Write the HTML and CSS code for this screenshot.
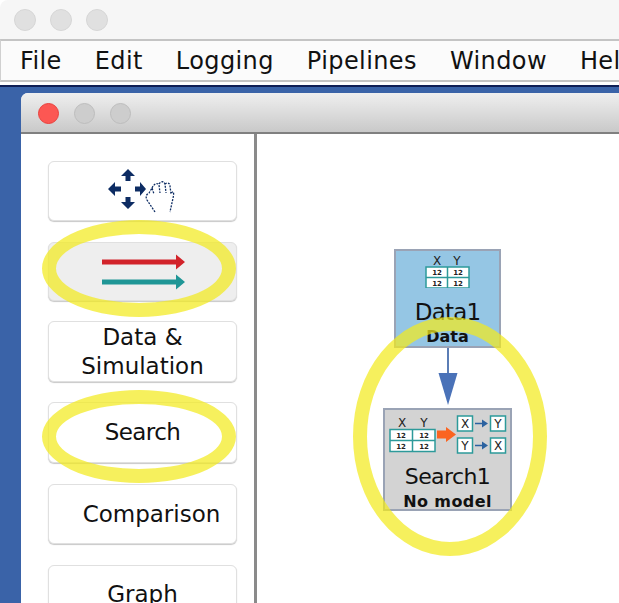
FILE: index.html
```html
<!DOCTYPE html>
<html>
  <head>
    <meta charset="UTF-8" />
    <title>Tetrad</title>
    <link rel="stylesheet" href="styles.css">
  </head>
  <body>
    <div class="titlebar">
      <span class="light"></span>
      <span class="light"></span>
      <span class="light"></span>
    </div>
    <div class="menubar">
      <span>File</span>
      <span>Edit</span>
      <span>Logging</span>
      <span>Pipelines</span>
      <span>Window</span>
      <span>Help</span>
    </div>
    <div class="desktop">
      <div class="window">
        <div class="window-title">
          <span class="light light-close"></span>
          <span class="light light-off"></span>
          <span class="light light-off"></span>
        </div>
        <div class="window-body">
          <div class="sidebar">
            <div class="tool tool-move">
              <svg width="80" height="50" viewBox="0 0 80 50">
                <g fill="#0d2c63">
                  <path d="M20 3 L27 10 L22.5 10 L22.5 15 L17.5 15 L17.5 10 L13 10 Z" />
                  <path d="M20 43 L27 36 L22.5 36 L22.5 31 L17.5 31 L17.5 36 L13 36 Z" />
                  <path d="M0 23 L7 16 L7 20.5 L13 20.5 L13 25.5 L7 25.5 L7 30 Z" />
                  <path d="M38 23 L32 16 L32 20.5 L27 20.5 L27 25.5 L32 25.5 L32 30 Z" />
                </g>
                <path d="M47 46 L39 34 C37 30 39 28 41 27 L44 22 L46 28 M44 22 C46 18 49 16 51 19 L52 27 M51 18 C53 15 56 15 57 18 L58 27 M57 18 C59 16 62 17 62 20 L63 28 C65 24 66 26 65.5 30 L62 46" fill="none" stroke="#0d2c63" stroke-width="1.3" stroke-dasharray="2 1.2" />
              </svg>
            </div>
            <div class="tool tool-flow">
              <svg width="84" height="36" viewBox="0 0 84 36">
                <path d="M0 5.5 H74 V0.5 L83 8 L74 15.5 V10.5 H0 Z" fill="#d2232a" />
                <path d="M0 25.5 H74 V20.5 L83 28 L74 35.5 V30.5 H0 Z" fill="#1f9696" />
              </svg>
            </div>
            <div class="tool tool-data">Data &amp;<br>Simulation</div>
            <div class="tool tool-search">Search</div>
            <div class="tool tool-compare">Comparison</div>
            <div class="tool tool-graph">Graph</div>
          </div>
          <div class="canvas">
            <svg class="edge" width="30" height="60" viewBox="0 0 30 60">
              <path d="M15 0 V26" stroke="#5b7db5" stroke-width="2" />
              <path d="M5.5 25 H24.5 L15 57 Z" fill="#4a72b8" />
            </svg>
            <div class="node node-data">
              <svg class="node-icon" width="46" height="32" viewBox="0 0 46 32">
                <text x="12" y="9" class="var">X</text>
                <text x="32" y="9" class="var">Y</text>
                <rect x="1" y="11" width="43" height="21" fill="#fff" stroke="#2d9a9a" stroke-width="1.5" />
                <path d="M22.5 11 V32 M1 21.5 H44" stroke="#2d9a9a" stroke-width="1.5" />
                <text x="12" y="19" class="cell">12</text>
                <text x="33" y="19" class="cell">12</text>
                <text x="12" y="29.5" class="cell">12</text>
                <text x="33" y="29.5" class="cell">12</text>
              </svg>
              <div class="node-name name-data">Data1</div>
              <div class="node-kind">Data</div>
            </div>
            <div class="node node-search">
              <svg class="node-icon" width="118" height="44" viewBox="0 0 118 44">
                <text x="13" y="12" class="var">X</text>
                <text x="35" y="12" class="var">Y</text>
                <rect x="1" y="14.5" width="45" height="22" fill="#fff" stroke="#2d9a9a" stroke-width="1.5" />
                <path d="M23.5 14.5 V36.5 M1 25.5 H46" stroke="#2d9a9a" stroke-width="1.5" />
                <text x="12" y="23" class="cell">12</text>
                <text x="35" y="23" class="cell">12</text>
                <text x="12" y="34" class="cell">12</text>
                <text x="35" y="34" class="cell">12</text>
                <path d="M48 15.5 H57 V12 L67 19.5 L57 27 V23.5 H48 Z" fill="#fb6420" />
                <g fill="#fff" stroke="#2d9a9a" stroke-width="1.5">
                  <rect x="68.5" y="1" width="15" height="15" />
                  <rect x="101.5" y="1" width="15" height="15" />
                  <rect x="68.5" y="23" width="15" height="15" />
                  <rect x="101.5" y="23" width="15" height="15" />
                </g>
                <text x="76" y="13" class="var">X</text>
                <text x="109" y="13" class="var">Y</text>
                <text x="76" y="35" class="var">Y</text>
                <text x="109" y="35" class="var">X</text>
                <path d="M86 8.5 H94 M86 30.5 H94" stroke="#2b62a0" stroke-width="1.6" />
                <path d="M93 4.5 L99 8.5 L93 12.5 Z M93 26.5 L99 30.5 L93 34.5 Z" fill="#2b62a0" />
              </svg>
              <div class="node-name name-search">Search1</div>
              <div class="node-kind kind-search">No model</div>
            </div>
          </div>
        </div>
      </div>
    </div>
    <!-- yellow rings drawn over the screenshot -->
    <div class="ring ring-flow"></div>
    <div class="ring ring-search"></div>
    <div class="ring ring-nodes"></div>
  </body>
</html>
```

FILE: styles.css
```css
html, body { margin: 0; height: 100%; }
body {
    width: 619px;
    height: 603px;
    overflow: hidden;
    position: relative;
    background: #fff;
    font-family: "DejaVu Sans", sans-serif;
    color: #111;
}
.titlebar {
    height: 39px;
    box-sizing: border-box;
    padding: 9px 0 0 14px;
    display: flex;
    gap: 14px;
    background: #f6f6f6;
    border-top-left-radius: 8px;
}
.light {
    width: 22px;
    height: 22px;
    box-sizing: border-box;
    border-radius: 50%;
    background: #e0e0e0;
    border: 1px solid #d6d6d6;
}
.menubar {
    height: 43px;
    box-sizing: border-box;
    display: flex;
    align-items: center;
    gap: 33px;
    padding: 0 0 0 19px;
    background: #fbfbfb;
    border-top: 2px solid #c4c4c4;
    border-bottom: 2px solid #c4c4c4;
    border-left: 1px solid #d0d0d0;
    font-size: 24px;
    letter-spacing: 0.4px;
    white-space: nowrap;
}
.desktop {
    height: 521px;
    box-sizing: border-box;
    padding: 6px 0 0 21px;
    margin-top: 3px;
    background: #3a63a8;
    border-top: 2px solid #0f1f55;
}
.window {
    height: 100%;
    background: #fff;
    border-top-left-radius: 7px;
    display: flex;
    flex-direction: column;
}
.window-title {
    height: 41px;
    flex: none;
    box-sizing: border-box;
    padding: 10px 0 0 17px;
    display: flex;
    gap: 15px;
    background: linear-gradient(#efefef, #c9c9c9);
    border-bottom: 2px solid #808080;
    border-top-left-radius: 7px;
}
.window-title .light { width: 21px; height: 21px; }
.light-close { background: #fc5753; border-color: #e9403c; }
.light-off { background: #cdcdcd; border-color: #bdbdbd; }
.window-body { flex: 1; display: flex; min-height: 0; }
.sidebar {
    width: 236px;
    flex: none;
    box-sizing: border-box;
    padding: 27px 0 0 27px;
    display: flex;
    flex-direction: column;
    gap: 20px;
    border-right: 3px solid #8a8a8a;
    overflow: hidden;
}
.tool {
    width: 189px;
    height: 60px;
    flex: none;
    box-sizing: border-box;
    display: flex;
    align-items: center;
    justify-content: center;
    text-align: center;
    line-height: 29px;
    font-size: 23px;
    background: #fff;
    border: 1px solid #e0e0e0;
    border-radius: 6px;
    box-shadow: 0 1px 1px #c8c8c8;
}
.tool-move { margin-bottom: 1px; }
.tool-move svg { margin-left: 10px; }
.tool-flow { height: 59px; background: #eee; }
.tool-flow svg { margin: 1px 0 0 2px; }
.tool-data { height: 61px; }
.tool-search { height: 61px; margin-bottom: 1px; letter-spacing: -0.6px; }
.tool-compare { margin-bottom: 1px; padding-left: 18px; }
.tool-graph { align-items: flex-start; padding-top: 14px; }
.canvas { flex: 1; position: relative; }
.node {
    position: absolute;
    box-sizing: border-box;
    display: flex;
    flex-direction: column;
    align-items: center;
    border: 2px solid #9aa3b5;
    padding-top: 5px;
}
.node-data {
    left: 137px;
    top: 115px;
    width: 107px;
    height: 99px;
    background: #95c6e4;
}
.node-search {
    left: 126px;
    top: 274px;
    width: 129px;
    height: 103px;
    background: #d3d3d3;
}
.node-icon { display: block; flex: none; }
.node-name { font-size: 23px; line-height: 28px; margin-top: 10px; }
.node-kind { font-size: 16px; font-weight: bold; line-height: 18px; margin-top: 2px; }
.name-data { letter-spacing: -0.8px; }
.name-search { font-size: 22px; margin-top: 4px; letter-spacing: -0.6px; }
.kind-search { letter-spacing: 0.4px; }
.var {
    font-family: "DejaVu Sans", sans-serif;
    font-size: 12px;
    text-anchor: middle;
    fill: #222;
}
.cell {
    font-family: "DejaVu Sans", sans-serif;
    font-size: 7px;
    font-weight: bold;
    text-anchor: middle;
    fill: #222;
}
.edge { position: absolute; left: 176px; top: 214px; }
.ring {
    position: absolute;
    box-sizing: border-box;
    border: 14px solid rgba(243, 234, 30, 0.72);
    border-radius: 50%;
    pointer-events: none;
}
.ring-flow { left: 42px; top: 220px; width: 194px; height: 97px; }
.ring-search { left: 42px; top: 390px; width: 194px; height: 93px; }
.ring-nodes { left: 353px; top: 317px; width: 194px; height: 239px; }
```
